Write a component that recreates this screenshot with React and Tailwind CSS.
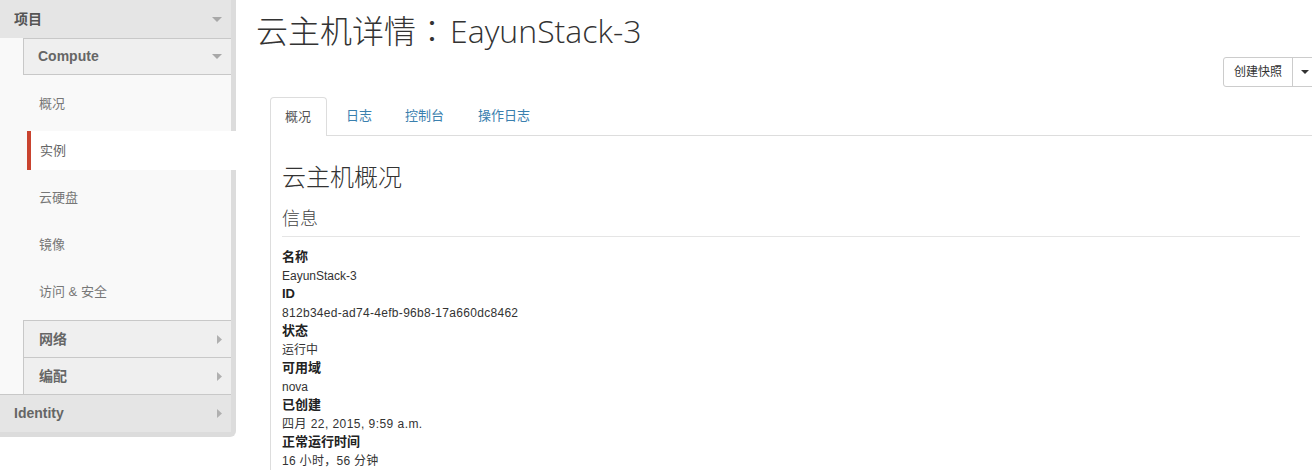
import React from "react";

const CaretDown = ({ className = "" }) => (
  <svg width="10" height="5" viewBox="0 0 10 5" className={className}>
    <path d="M0 0 L10 0 L5 5 Z" fill="#a8a8a8" />
  </svg>
);
const CaretRight = () => (
  <svg width="5" height="9" viewBox="0 0 5 9">
    <path d="M0 0 L5 4.5 L0 9 Z" fill="#b0b0b0" />
  </svg>
);

function Sidebar() {
  const items = ["概况", "实例", "云硬盘", "镜像", "访问 & 安全"];
  return (
    <div className="w-[236px] shrink-0 self-start border-r-[5px] border-b-[5px] border-[#dcdcdc] rounded-br-[6px] bg-[#f9f9f9]">
      <div className="h-[38px] bg-[#e5e5e5] flex items-center justify-between pl-[14px] pr-[9px] text-[14px] font-bold text-[#555]">
        <span>项目</span>
        <CaretDown />
      </div>
      <div className="ml-[23px]">
        <div className="h-[37px] bg-[#efefef] border-t border-b border-l border-[#c8c8c8] flex items-center justify-between pl-[14px] pr-[9px] text-[14px] font-bold text-[#666]">
          <span>Compute</span>
          <CaretDown />
        </div>
        <div className="pt-[5px] pb-[5px]">
          {items.map((t) => {
            const active = t === "实例";
            return (
              <div key={t} className="h-[47px] py-[4px]">
                {active ? (
                  <div className="h-full ml-[4px] -mr-[5px] bg-white border-l-4 border-[#c9432f] pl-[9px] flex items-center text-[13px] text-[#666]">
                    {t}
                  </div>
                ) : (
                  <div className="h-full pl-[16px] flex items-center text-[13px] text-[#777]">
                    {t}
                  </div>
                )}
              </div>
            );
          })}
        </div>
        {["网络", "编配"].map((t) => (
          <div
            key={t}
            className="h-[37px] bg-[#efefef] border-t border-l border-[#c8c8c8] flex items-center justify-between pl-[15px] pr-[9px] text-[14px] font-bold text-[#666]"
          >
            <span>{t}</span>
            <CaretRight />
          </div>
        ))}
      </div>
      <div className="h-[38px] bg-[#e5e5e5] border-t border-[#c8c8c8] flex items-center justify-between pl-[14px] pr-[9px] text-[14px] font-bold text-[#666]">
        <span>Identity</span>
        <CaretRight />
      </div>
    </div>
  );
}

function Main() {
  const rows = [
    ["名称", "EayunStack-3", ""],
    ["ID", "812b34ed-ad74-4efb-96b8-17a660dc8462", "tracking-[0.3px]"],
    ["状态", "运行中", ""],
    ["可用域", "nova", ""],
    ["已创建", "四月 22, 2015, 9:59 a.m.", "tracking-[0.45px]"],
    ["正常运行时间", "16 小时，56 分钟", "tracking-[0.3px]"],
  ];
  return (
    <div className="flex-1 min-w-0 pl-[20px]">
      <h1
        className="mt-[10px] h-[38px] leading-[38px] text-[32px] text-[#333] font-light whitespace-nowrap"
        style={{ fontFamily: '"Open Sans","Noto Sans CJK SC",sans-serif' }}
      >
        云主机详情
        <span className="mr-[2px]" style={{ fontFamily: '"Noto Sans CJK TC",sans-serif' }}>：</span>
        EayunStack-3
      </h1>
      <div className="flex justify-end mt-[9px] -mr-[6px]">
        <div className="flex h-[30px] border border-[#cccccc] rounded-[3px] text-[12px] text-[#333] bg-white">
          <div className="px-[10px] flex items-center border-r border-[#cccccc]">创建快照</div>
          <div className="w-[24px] flex items-center justify-center">
            <svg width="8" height="4" viewBox="0 0 8 4">
              <path d="M0 0 L8 0 L4 4 Z" fill="#333" />
            </svg>
          </div>
        </div>
      </div>
      <div className="ml-[14px] mt-[10px]">
        <div className="flex h-[39px] border-b border-[#dddddd] text-[13px]">
          <div className="w-[57px] h-[39px] border border-b-0 border-[#dddddd] rounded-t-[4px] bg-white flex items-center pl-[14px] text-[#555] -mb-px">
            概况
          </div>
          <div className="ml-[19px] flex items-center text-[#3a80ae]">日志</div>
          <div className="ml-[33px] flex items-center text-[#3a80ae]">控制台</div>
          <div className="ml-[34px] flex items-center text-[#3a80ae]">操作日志</div>
        </div>
        <div className="border-l border-[#dddddd] pl-[11px] pr-[12px] pb-[20px]">
          <h2 className="pt-[26px] h-[58px] leading-[32px] text-[24px] text-[#333] font-light">云主机概况</h2>
          <h3 className="mt-[12px] leading-[26px] text-[18px] text-[#444] font-light">信息</h3>
          <div className="mt-[4px] border-t border-[#e5e5e5]" />
          <dl className="mt-[11px]">
            {rows.map(([k, v, cls]) => (
              <React.Fragment key={k}>
                <dt className="text-[13px] leading-[18.5px] font-bold text-[#222]">{k}</dt>
                <dd className={"text-[12px] leading-[18.5px] text-[#333] " + cls}>{v}</dd>
              </React.Fragment>
            ))}
          </dl>
        </div>
      </div>
    </div>
  );
}

export default function App() {
  return (
    <div
      className="w-[1312px] h-[470px] overflow-hidden bg-white flex"
      style={{ fontFamily: '"Liberation Sans","Noto Sans CJK SC",sans-serif' }}
    >
      <Sidebar />
      <Main />
    </div>
  );
}
